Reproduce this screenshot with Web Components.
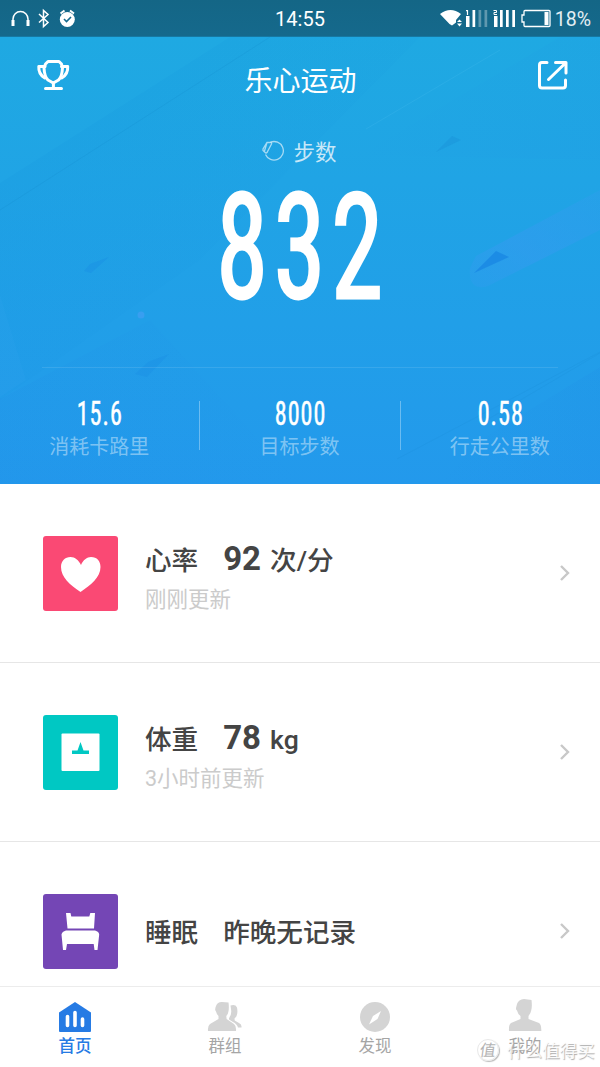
<!DOCTYPE html>
<html lang="zh-CN">
<head>
<meta charset="utf-8">
<title>乐心运动</title>
<style>
html,body{margin:0;height:100%;overflow:hidden}
body{font-family:Roboto,"Noto Sans CJK SC",sans-serif;background:#fff}
</style>
</head>
<body>
<sport-app></sport-app>
<script>
const define=(name,html)=>customElements.define(name,class extends HTMLElement{
  constructor(){
    super();
    const t=document.createElement('template');
    t.innerHTML=html.replace(/\{\{(\w+)\}\}/g,(_,k)=>this.getAttribute(k)||'');
    this.attachShadow({mode:'open'}).append(t.content.cloneNode(true));
  }
});

define('status-bar',`<style>
:host{display:grid;grid-template-columns:1fr auto 1fr;align-items:center;height:37px;box-sizing:border-box;background:linear-gradient(#146686,#15698c);border-bottom:1px solid #1678a2;color:#fff;font-size:20px}
svg{display:block}.l{padding-left:10px}.r{display:flex;align-items:center;justify-content:flex-end;padding-right:9px;gap:4px}
.c{transform:translateY(1px)}.p{transform:translateY(1px);color:#e4eff3;font-size:19.5px}
</style>
<div class="l"><svg width="70" height="36" viewBox="0 0 70 36" fill="none" stroke="#fff">
<path d="M3 22v-3a7.5 7.5 0 0 1 15 0v3" stroke-width="1.5"/><path d="M3 20v6M18 20v6" stroke-width="3"/>
<path d="M29 14l9 8.5-4.500 4V10.500l4.500 4L29 22.500" stroke-width="1.500"/>
<circle cx="57.300" cy="19.500" r="7.500" fill="#fff" stroke="none"/><path d="M50.500 13.500l4-3M64 13.500l-4-3" stroke-width="2"/><path d="M54 19l2.500 2.500 4.500-4.500" stroke="#15698c" stroke-width="1.600"/></svg></div>
<div class="c">14:55</div>
<div class="r"><svg width="112" height="36" viewBox="439 0 112 36">
<path d="M440 14q10.500-8 21 0l-5 6v2.500l-4 3L449.500 24z" fill="#fff"/><path d="M457 22l2.500-2.500L462 22zM457 23.500h5l-2.500 3z" fill="#fff"/>
<path d="M466 16h3.500v11H466zM472.500 10h2.700v17h-2.700zM494 16h3.500v11H494zM500 10h2.700v17H500zM506 10h2.700v17H506zM512.300 10h2.700v17h-2.700z" fill="#fff"/>
<path d="M478.500 10h2.700v17h-2.700zM484.500 10h2.700v17h-2.700z" fill="#fff" opacity=".32"/>
<path d="M466 10.700h1.500V15" fill="none" stroke="#fff" stroke-width="1.200"/><path d="M493.500 10.500h3v2h-2.500v2h3" fill="none" stroke="#fff"/>
<path d="M524 11.500q0-1 1-1h24q1 0 1 1v14q0 1-1 1h-24q-1 0-1-1V22h-2v-7h2z" fill="none" stroke="#fff" stroke-width="1.300"/><path d="M544.500 12h4v13h-4z" fill="#fff"/></svg>
<span class="p">18%</span></div>`);

define('hero-header',`<style>
:host{display:flex;justify-content:space-between;height:86px;padding:0 29px 0 35px;color:#fff;font-size:28px}
.t{font-family:"Noto Sans CJK SC",sans-serif;line-height:85px;font-weight:400;margin-left:-5px}
svg{display:block;flex:none;margin-top:20px}
</style>
<svg width="36" height="36" viewBox="35 57 36 36" fill="none" stroke="#fff" stroke-width="3" stroke-linejoin="round" stroke-linecap="round"><path d="M48 61.500h11l2.500 2.500 1 4q-.5 9-4 12l-5.200 3-5.300-3q-3.500-3-4-12l1.500-4z"/><path d="M45 66.500h-6.200q-.5 7.500 6 11.500M61.500 66.500h6.200q.5 7.500-6 11.500M45.500 88.500h16M53.400 83v5"/></svg>
<div class="t"><slot></slot></div>
<svg width="36" height="36" viewBox="535 57 36 36" fill="none" stroke="#fff" stroke-width="3" stroke-linecap="round" stroke-linejoin="round"><path d="M547 62.500h-5q-2.500 0-2.500 2.500v20.500q0 2.500 2.500 2.500h21q2.500 0 2.500-2.500V80M555.500 62.500h10.500V73M548.500 79.500l17-16.500"/></svg>`);

define('step-counter',`<style>
:host{display:flex;flex-direction:column;align-items:center;height:244px;box-sizing:border-box;padding-top:11px;color:#fff}
.h{display:flex;align-items:center;gap:9px;margin-right:1px;color:rgba(255,255,255,.75);font:400 21.500px/34px "Noto Sans CJK SC",sans-serif}
.n{font:400 146.500px/136px "Roboto Condensed",sans-serif;letter-spacing:8px;margin:12px -200px 0;-webkit-text-stroke:2.800px #fff;transform:scaleX(.715);padding-left:7px;white-space:nowrap}
</style>
<div class="h"><svg width="22" height="22" viewBox="0 0 22 22" fill="none" stroke="#fff" stroke-opacity=".6" stroke-width="1.300"><path d="M8.500 2.200A9.300 9.300 0 1 1 3.500 14.500"/><path d="M5 2.500h4q1 .4.500 1.500l-4.500 8.500q-1 1-1.800 0L1 10.500V9zM5 2.500L2.500 11"/></svg><span>步数</span></div>
<div class="n"><slot></slot></div>`);

define('stat-cell',`<style>
:host{display:flex;flex:1;flex-direction:column;align-items:center;color:#fff}
.v{font:400 33.500px/37px "Roboto Condensed",sans-serif;letter-spacing:1.400px;transform:scaleX(.72);-webkit-text-stroke:.5px #fff;padding-left:2px;white-space:nowrap}
.l{font:400 20px/28px "Noto Sans CJK SC",sans-serif;color:rgba(255,255,255,.43)}
</style><div class="v"><slot></slot></div><div class="l">{{label}}</div>`);

define('stat-row',`<style>
:host{display:flex;margin:0 42px;padding:27px 0 0;border-top:1px solid rgba(255,255,255,.1)}
.w{display:flex;flex:1;margin:0 -42px 0 -43px}
::slotted(stat-cell){min-width:0}
::slotted(stat-cell:not(:first-child)){background:linear-gradient(rgba(255,255,255,.33),rgba(255,255,255,.33)) 0 6px/1px 49px no-repeat}
</style><div class="w"><slot></slot></div>`);

define('step-hero',`<style>
:host{display:block;position:relative;height:447px;background:linear-gradient(#1fa9e2,#219fe8 64%,#2399ec);overflow:hidden}
.bg{position:absolute;inset:0}
.c{position:relative}
</style>
<svg class="bg" width="600" height="447" viewBox="0 37 600 447">
<defs><linearGradient id="a" x1="0" y1="0" x2="1" y2="1"><stop stop-color="#0c88d8" stop-opacity=".14"/><stop offset=".8" stop-color="#0c88d8" stop-opacity="0"/></linearGradient>
<linearGradient id="d" x1="0" y1="0" x2="1" y2="0"><stop stop-color="#1f84e4" stop-opacity=".22"/><stop offset="1" stop-color="#1f84e4" stop-opacity="0"/></linearGradient>
<linearGradient id="e" x1="1" y1="0" x2="0" y2="0"><stop stop-color="#1f84e4" stop-opacity=".25"/><stop offset="1" stop-color="#1f84e4" stop-opacity="0"/></linearGradient>
<linearGradient id="b" x1="0" y1="1" x2="1" y2="0"><stop stop-color="#3c98f4" stop-opacity=".2"/><stop offset=".4" stop-color="#3c98f4" stop-opacity=".4"/><stop offset="1" stop-color="#3c98f4" stop-opacity=".2"/></linearGradient></defs>
<path d="M0 183L230 37H420L200 260L0 400z" fill="url(#a)"/><path d="M0 210L270 37" stroke="#1585c8" stroke-opacity=".2"/>
<path d="M360 155L560 37H600V160z" fill="url(#e)" opacity=".3"/><path d="M366 129L500 50" stroke="#5cc4f4" stroke-opacity=".16"/>
<path d="M0 399L150 320L300 484H0z" fill="url(#d)" opacity=".5"/><path d="M0 295L26 380L0 397z" fill="#38a8f4" opacity=".15"/>
<path d="M600 367L480 440L440 484H600z" fill="url(#e)" opacity=".55"/><path d="M397 459L600 352M485 421L600 353" stroke="#1585c8" stroke-opacity=".13"/>
<path d="M476 256L600 190V230L488 286Q468 292 470 268z" fill="url(#b)"/>
<path d="M474 273L496 251L509 257z" fill="#1583e2" opacity=".65"/><path d="M436 152L452 136L461 140z" fill="#1583d0" opacity=".25"/>
<path d="M84 271L90 264L109 257L91 273z" fill="#1583e2" opacity=".24"/><path d="M135 374L148 362L169 354L147 377z" fill="#1583e2" opacity=".2"/><circle cx="141" cy="315" r="3.500" fill="#479ff5" opacity=".6"/>
</svg><div class="c"><slot></slot></div>`);

define('metric-row',`<style>
:host{display:flex;align-items:center;height:179px;box-sizing:border-box;border-bottom:1px solid #e6e6e6;padding:0 29px 0 43px;color:#444}
.i{width:75px;height:75px;border-radius:3px;overflow:hidden;flex:none}
.b{flex:1;margin-left:27px;padding-top:9px}
:host(:not([note])) .b{padding-top:3px}
.t{display:flex;align-items:baseline;font:500 26.600px/38px Roboto,"Noto Sans CJK SC",sans-serif;white-space:nowrap}
.n{margin-right:25px}
.s{font:400 21.500px/32px Roboto,"Noto Sans CJK SC",sans-serif;color:#cbcbcb;margin-top:4px}
.s:empty{display:none}
</style><div class="i"><slot name="icon"></slot></div><div class="b"><div class="t"><span class="n">{{name}}</span><slot></slot></div><div class="s">{{note}}</div></div>
<svg width="12" height="18" viewBox="0 0 12 18" fill="none" stroke="#c8c8c8" stroke-width="2.400"><path d="M2 2l7 7-7 7"/></svg>`);

define('big-value',`<style>:host{font:700 33px/38px Roboto,sans-serif;margin-right:9px}</style><slot></slot>`);

define('metric-icon',`<style>:host{display:block;width:75px;height:75px;background:var(--tile)}svg{display:none}:host([kind=heart]) .heart,:host([kind=scale]) .scale,:host([kind=bed]) .bed{display:block}</style>
<svg class="heart" width="75" height="75" fill="#fff"><path d="M37.500 56C27 49 18 41 18 31c0-6 4-10 9.500-10 4.500 0 8 3 10.500 8 2-5 6-8 10-8 6 0 9.500 4 9.500 10C57.500 41 48 49 37.500 56z"/></svg>
<svg class="scale" width="75" height="75"><rect x="18.500" y="18.500" width="38" height="37.500" rx="1" fill="#fff"/><path d="M29 35.500h5.500l3-8.500 3 8.500h5.500v3.500H29z" fill="#00c8c3"/></svg>
<svg class="bed" width="75" height="75" fill="#fff"><path d="M23 19h4.500l.8 3.500h18l1-3.500H52l-1 15.500H24.500zM23 36.500h29q4 1 4.200 4L54.500 56h-3l-.8-6H24l-1 6h-3l-1.500-15.500q.5-3 4.500-4z"/></svg>`);

define('tab-item',`<style>
:host{flex:1;display:flex;flex-direction:column;align-items:center;padding-top:9px;box-sizing:border-box;color:#a5a5a5;font:400 16.500px/25px "Noto Sans CJK SC",sans-serif}
:host([active]){color:#267be4;font-weight:500}
svg{display:none}
:host([kind=home]) .home,:host([kind=group]) .group,:host([kind=find]) .find,:host([kind=me]) .me{display:block}
</style>
<svg class="home" width="36" height="37" fill="#267be4"><path d="M18 6l16 10.500V35q0 1-1 1H3q-1 0-1-1V16.500z"/><path d="M10.500 20.500v9M18 16.500v13M25.500 23v6.500" stroke="#fff" stroke-width="3.600" stroke-linecap="round"/></svg>
<svg class="group" width="36" height="37" fill="#d4d4d4"><path d="M9 10q1.500-4.200 6-4l6.500.5q.8 6-.2 9.500-.3 2.500-2 4l.3 3L27 28q2.500 2 2 7H1Q.5 30 3 28l8.500-5v-3q-2-2-2.500-4.500-1-1-.8-2 0-2 .8-3.500z"/><path d="M23.500 9.500q5-1.500 6.500 2 .8 4.500 0 7-.5 2.500-2.500 4l.2 2 4.300 2.500q3 1.500 2.500 4.500h-3.500Q30 28 26 26l-4-2.500v-1.500q3-3 2-9z"/></svg>
<svg class="find" width="36" height="37"><circle cx="18" cy="21" r="15" fill="#d4d4d4"/><path d="M24 15l-3.500 8-8.500 5.500 4-8.500z" fill="#fff"/></svg>
<svg class="me" width="36" height="37" fill="#d4d4d4"><path d="M10 8q1.500-4.500 7-5l7.500 1q.8 7-.3 10.500-.5 3-2.700 5.500v3L32 27q2.500 1.500 2.300 8H2q-.5-6 2-8l9.500-4V20q-2.700-2-3.500-5.500-1.200-1-1-2.500z"/></svg>
<span><slot></slot></span>`);

define('tab-bar',`<style>:host{display:flex;position:relative;z-index:1;height:81px;box-sizing:border-box;background:#fff;border-top:1px solid #ececec}</style><slot></slot>`);

define('water-mark',`<style>
:host{position:absolute;z-index:2;left:477px;bottom:4px;display:flex;align-items:center;gap:8px;color:rgba(255,255,255,.88);font:400 17.600px/26px "Noto Sans CJK SC",sans-serif;text-shadow:.7px .7px 1px #aaa;white-space:nowrap}
.o{width:22px;height:22px;box-sizing:border-box;border-radius:50%;border:1px solid #e8e8e8;box-shadow:1px 1px 1px #bbb;text-align:center;font-size:16px;line-height:19px;color:#b4b4b4;text-shadow:none}
.o i{display:block;transform:skewX(-8deg);font-style:normal}
</style><span class="o"><i>值</i></span><span><slot></slot></span>`);

define('sport-app',`<style>
:host{display:flex;flex-direction:column;width:600px;height:1067px;position:relative;overflow:hidden}
status-bar,step-hero,tab-bar{flex:none}
main{flex:1;min-height:0;overflow:hidden}
</style>
<status-bar></status-bar>
<step-hero>
<hero-header>乐心运动</hero-header>
<step-counter>832</step-counter>
<stat-row><stat-cell label="消耗卡路里">15.6</stat-cell><stat-cell label="目标步数">8000</stat-cell><stat-cell label="行走公里数">0.58</stat-cell></stat-row>
</step-hero>
<main>
<metric-row name="心率" note="刚刚更新"><metric-icon slot="icon" kind="heart" style="--tile:#fa4974"></metric-icon><big-value>92</big-value><span>次/分</span></metric-row>
<metric-row name="体重" note="3小时前更新"><metric-icon slot="icon" kind="scale" style="--tile:#00c8c3"></metric-icon><big-value>78</big-value><span>kg</span></metric-row>
<metric-row name="睡眠"><metric-icon slot="icon" kind="bed" style="--tile:#7446b5"></metric-icon><span>昨晚无记录</span></metric-row>
</main>
<tab-bar><tab-item kind="home" active>首页</tab-item><tab-item kind="group">群组</tab-item><tab-item kind="find">发现</tab-item><tab-item kind="me">我的</tab-item></tab-bar>
<water-mark>什么值得买</water-mark>`);
</script>
</body>
</html>
